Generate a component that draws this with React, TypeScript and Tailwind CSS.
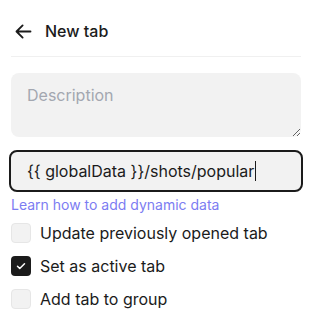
import { useState } from 'react';

function Check({ checked }: { checked: boolean }) {
  return checked ? (
    <span className="flex h-5 w-5 items-center justify-center rounded-[4px] bg-[#1b1b1b]">
      <svg width="12" height="12" viewBox="0 0 24 24" fill="none" stroke="#fff" strokeWidth="3" strokeLinecap="round" strokeLinejoin="round">
        <path d="M5 12.5l4.5 4.5L19 7.5" />
      </svg>
    </span>
  ) : (
    <span className="h-5 w-5 rounded-[4px] border border-[#e6e6e6] bg-[#f2f2f2]" />
  );
}

export default function App() {
  const [opts, setOpts] = useState([
    { label: 'Update previously opened tab', checked: false },
    { label: 'Set as active tab', checked: true },
    { label: 'Add tab to group', checked: false },
  ]);

  return (
    <div className="h-[328px] w-[312px] bg-white px-[11px] font-['Inter',sans-serif] text-[#1b1b1b]">
      <div className="flex h-[57px] items-center gap-[11px] border-b border-[#f0f0f0] pl-[2px] pt-[6px]">
        <svg width="21" height="21" viewBox="0 0 24 24" fill="none" stroke="#1b1b1b" strokeWidth="2.1" strokeLinecap="round" strokeLinejoin="round">
          <path d="M20 12H4M11 5l-7 7 7 7" />
        </svg>
        <span className="text-[16px] font-medium">New tab</span>
      </div>

      <textarea
        placeholder="Description"
        className="mt-[16px] block h-[64px] w-full rounded-[8px] bg-[#f2f2f2] px-[16px] py-[10px] text-[16px] placeholder:text-[#a3a7b0] outline-none"
      />

      <div className="mt-[13px] -mx-[2px] flex h-[42px] items-center rounded-[8px] border-2 border-[#1b1b1b] bg-[#f2f2f2] px-[16px] text-[16px]">
        <span>{'{{ globalData }}/shots/popular'}</span>
        <span className="ml-[1px] h-[20px] w-[1px] bg-[#1b1b1b]" />
      </div>

      <a className="mt-[5px] block text-[14px] leading-[16px] text-[#7c7cf2]">Learn how to add dynamic data</a>

      <div className="mt-[10px] flex flex-col gap-[13px]">
        {opts.map((o, i) => (
          <label
            key={o.label}
            className="flex h-5 cursor-pointer items-center gap-[9px] text-[16px]"
            onClick={() => setOpts(opts.map((x, j) => (j === i ? { ...x, checked: !x.checked } : x)))}
          >
            <Check checked={o.checked} />
            <span>{o.label}</span>
          </label>
        ))}
      </div>
    </div>
  );
}
